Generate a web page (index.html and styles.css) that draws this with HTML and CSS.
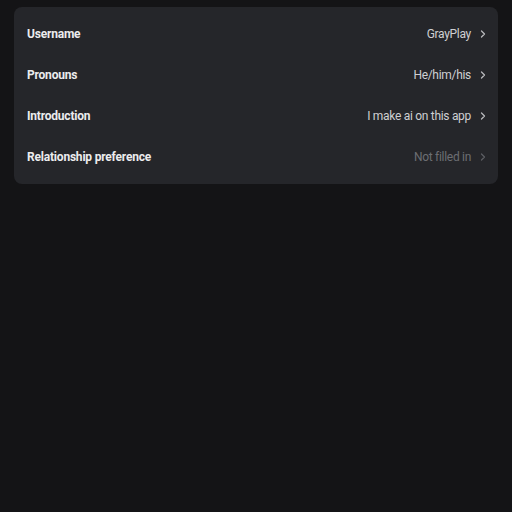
FILE: index.html
```html
<!DOCTYPE html>
<html>
<head>
<meta charset="utf-8">
<link rel="stylesheet" href="styles.css">
</head>
<body>
<div class="card">
  <div class="row">
    <span class="label">Username</span>
    <span class="value">GrayPlay</span>
    <svg class="chev" viewBox="0 0 6 10" width="6" height="10"><path d="M1.5 2 L4.5 5 L1.5 8" fill="none" stroke="currentColor" stroke-width="1.3" stroke-linecap="round" stroke-linejoin="round"/></svg>
  </div>
  <div class="row">
    <span class="label">Pronouns</span>
    <span class="value">He/him/his</span>
    <svg class="chev" viewBox="0 0 6 10" width="6" height="10"><path d="M1.5 2 L4.5 5 L1.5 8" fill="none" stroke="currentColor" stroke-width="1.3" stroke-linecap="round" stroke-linejoin="round"/></svg>
  </div>
  <div class="row">
    <span class="label">Introduction</span>
    <span class="value">I make ai on this app</span>
    <svg class="chev" viewBox="0 0 6 10" width="6" height="10"><path d="M1.5 2 L4.5 5 L1.5 8" fill="none" stroke="currentColor" stroke-width="1.3" stroke-linecap="round" stroke-linejoin="round"/></svg>
  </div>
  <div class="row empty">
    <span class="label">Relationship preference</span>
    <span class="value">Not filled in</span>
    <svg class="chev" viewBox="0 0 6 10" width="6" height="10"><path d="M1.5 2 L4.5 5 L1.5 8" fill="none" stroke="currentColor" stroke-width="1.3" stroke-linecap="round" stroke-linejoin="round"/></svg>
  </div>
</div>
</body>
</html>
```
FILE: styles.css
```css
html, body {
  margin: 0;
  padding: 0;
  background: #141416;
  height: 100%;
}
body {
  padding: 7px 14px 0 14px;
  box-sizing: border-box;
  font-family: Roboto, "Liberation Sans", sans-serif;
}
.card {
  background: #25262a;
  border-radius: 8px;
  padding: 6px 12px 7px 13px;
  display: flex;
  flex-direction: column;
}
.row {
  height: 41px;
  display: flex;
  align-items: center;
}
.label {
  font-size: 12px;
  font-weight: 700;
  letter-spacing: -0.2px;
  color: #ececee;
  flex: 1;
}
.value {
  font-size: 12px;
  letter-spacing: -0.3px;
  color: #cfd0d3;
  margin-right: 9px;
}
.chev {
  color: #b8b9bc;
  flex: none;
}
.empty .value {
  color: #6c6e73;
}
.empty .chev {
  color: #5c5e63;
}
```
